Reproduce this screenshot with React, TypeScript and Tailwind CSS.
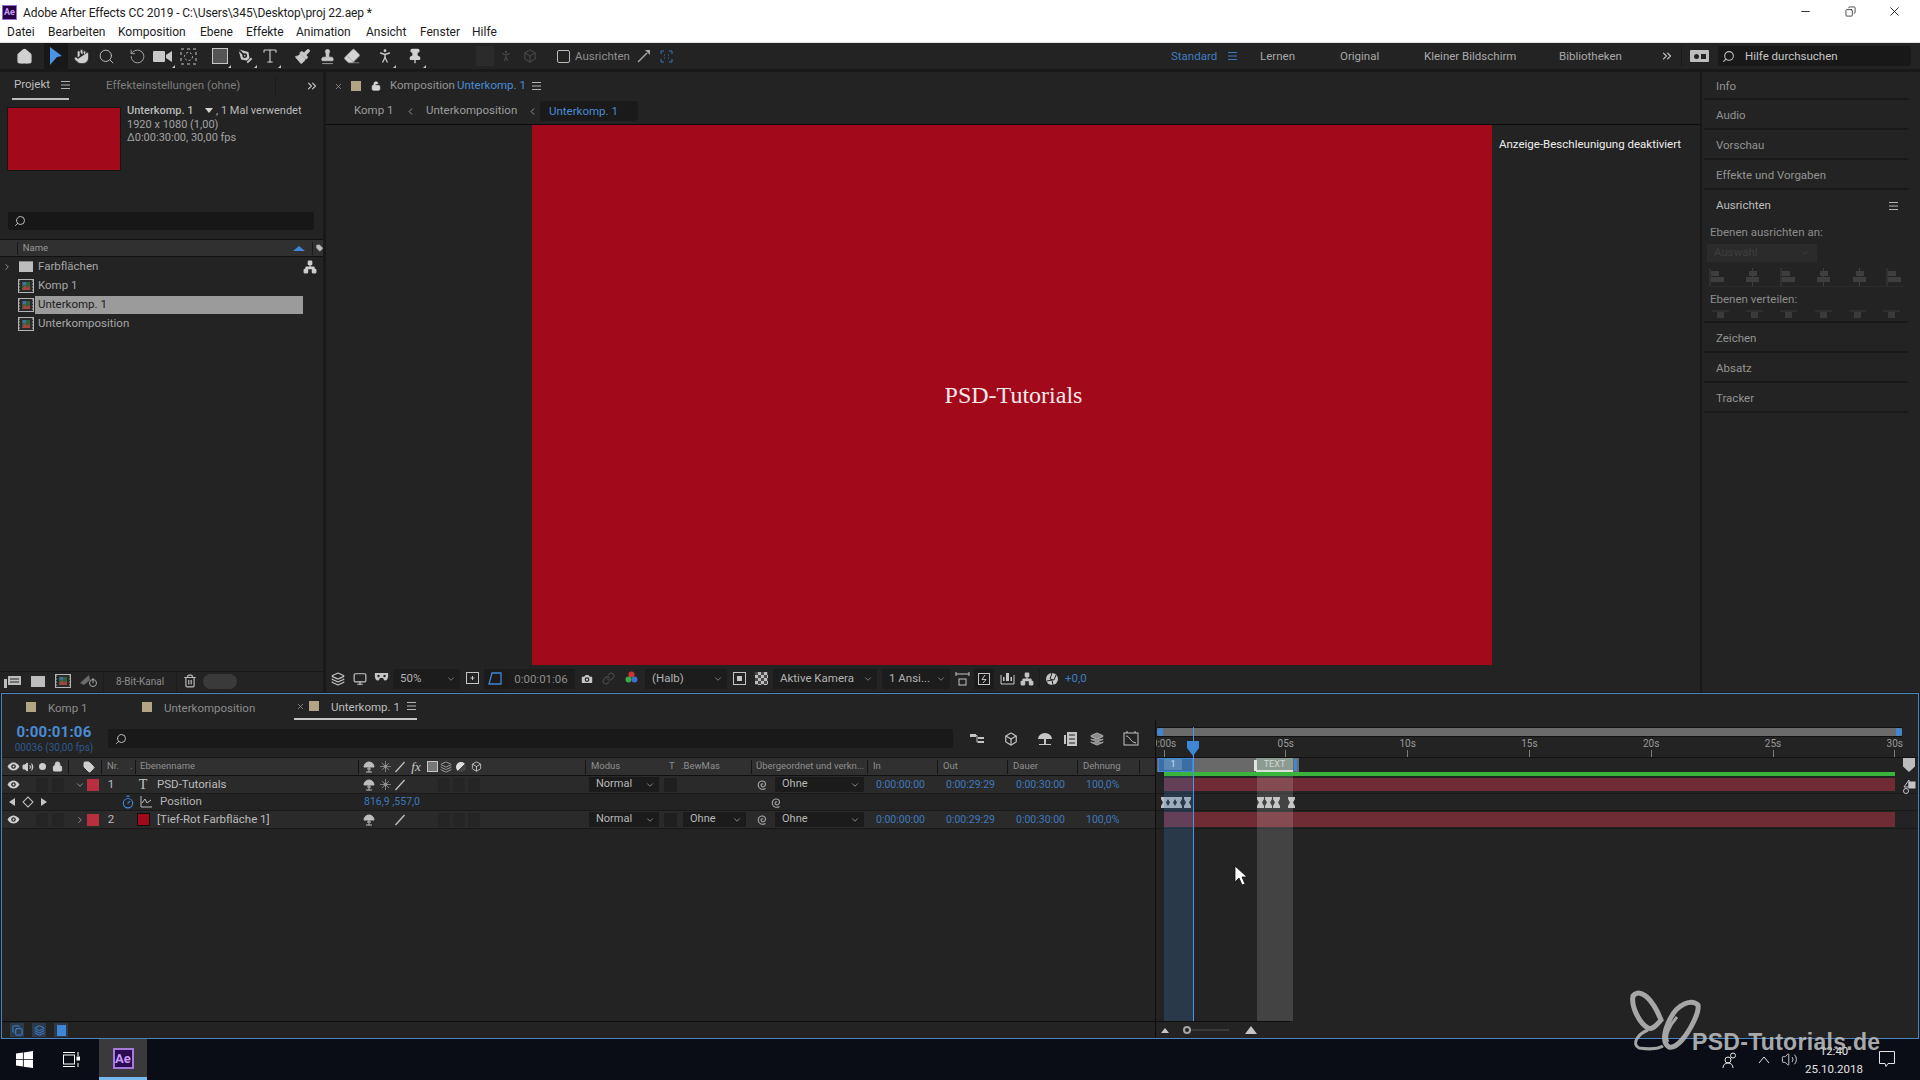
import React from "react";
import { ChevronDown, ChevronLeft, ChevronRight, ChevronsRight, Hand, House, Minus, Monitor, Network, PenTool, PersonStanding, Pin, RotateCcw, Search, Stamp, Trash2, Paintbrush, Eraser, Camera, Link, Timer, X, Copy, Type, Volume2, Tag, Lock, LockOpen, Box, Layers } from "lucide-react";

const Burger = ({ c = "#b5b5b5" }: { c?: string }) => (
  <svg width="11" height="10" viewBox="0 0 11 10"><path d="M1 1.5h9M1 5h9M1 8.5h9" stroke={c} strokeWidth="1.1" /></svg>
);
const Corner = () => <span className="absolute right-[1px] bottom-[1px] w-0 h-0 border-l-[3px] border-l-transparent border-b-[3px] border-b-[#c5c5c5]" />;
const Slot = ({ w, children, corner }: { w: string; children?: React.ReactNode; corner?: boolean }) => (
  <span className={`${w} relative h-full flex items-center justify-center shrink-0`}>{children}{corner && <Corner />}</span>
);
const Eye = () => (
  <svg width="13" height="9" viewBox="0 0 13 9"><path d="M.5 4.5C2.5 1.5 4.500 .5 6.500 .5s4 1 6 4c-2 3-4 4-6 4s-4-1-6-4z" fill="#d2d2d2" /><circle cx="6.500" cy="4.500" r="2.300" fill="#2a2a2a" /><circle cx="6.500" cy="4.500" r="1" fill="#d2d2d2" /></svg>
);
const Spiral = ({ c = "#a8a8a8" }: { c?: string }) => (
  <svg width="13" height="13" viewBox="0 0 13 13" fill="none"><path d="M7 6.500c0-1-1.800-1-2 .3-.2 1.600 1.500 2.500 3 1.800 1.800-.9 2-3.300.6-4.700C7 2.400 4 2.700 2.800 4.700 1.500 7 2.500 10 5 11c1.500.5 3 .3 4.500-.5" stroke={c} strokeWidth="1.100" /></svg>
);
const Swatch = ({ c = "#b3a583" }: { c?: string }) => <span className="block w-[10px] h-[10px] shrink-0" style={{ background: c }} />;
const CompIcon = () => (
  <svg width="16" height="14" viewBox="0 0 16 14" className="shrink-0"><rect x=".5" y=".5" width="15" height="13" fill="#2a2a2a" stroke="#b4b4b4" /><path d="M1 2h1M1 5h1M1 8h1M1 11h1M14 2h1M14 5h1M14 8h1M14 11h1" stroke="#b4b4b4" /><rect x="4" y="3" width="8" height="8" fill="#35603f" /><path d="M4 11l3-5 2 3 3-2v4z" fill="#a5443f" /><rect x="5" y="3" width="3" height="3" fill="#3f6fa8" /></svg>
);
const Drop = ({ w, label, ml = "", tc = "text-[#b2b2b2]" }: { w: string; label: string; ml?: string; tc?: string }) => (
  <span className={`${w} ${ml} h-[20px] bg-[#1c1c1c] rounded-[2px] flex items-center justify-between pl-[7px] pr-[4px] shrink-0 overflow-hidden`}>
    <span className={`${tc} whitespace-nowrap text-[11.500px]`}>{label}</span>
    <ChevronDown size={10} color="#8e8e8e" />
  </span>
);
const RowDrop = ({ w, label, ml = "" }: { w: string; label: string; ml?: string }) => (
  <span className={`${w} ${ml} h-[15px] bg-[#1b1b1b] flex items-center justify-between pl-[7px] pr-[4px] shrink-0`}>
    <span className="text-[#b8b8b8] text-[11px] whitespace-nowrap">{label}</span>
    <ChevronDown size={10} color="#9a9a9a" />
  </span>
);
const Sep = ({ ml = "" }: { ml?: string }) => <span className={`${ml} w-px h-[14px] bg-[#141414] shrink-0`} />;
const Time = ({ ml, w, t }: { ml: string; w: string; t: string }) => <span className={`${ml} ${w} shrink-0 text-[#3f79bd] text-[10.500px] whitespace-nowrap`}>{t}</span>;
const Dark = ({ ml }: { ml: string }) => <span className={`${ml} w-[12px] h-[14px] bg-[#252525] shrink-0`} />;
const SwitchA = () => <svg width="12" height="12" viewBox="0 0 12 12"><path d="M1 6a5 5 0 0 1 10 0zM6 6v5M3 11h6M4 8h4" stroke="#bdbdbd" fill="#bdbdbd" strokeWidth="1" /></svg>;
const SwitchB = () => <svg width="11" height="11" viewBox="0 0 11 11"><circle cx="5.500" cy="5.500" r="2" fill="#8e8e8e" /><path d="M5.500 0v11M0 5.500h11M2 2l7 7M9 2l-7 7" stroke="#8e8e8e" strokeWidth=".8" /></svg>;
const Slash = () => <svg width="12" height="12" viewBox="0 0 12 12"><path d="M1.500 11 10.500 1" stroke="#c8c8c8" strokeWidth="1.200" /></svg>;
const Hourglass = ({ x }: { x: number }) => (
  <svg width="7" height="11" viewBox="0 0 9 11" preserveAspectRatio="none" className="absolute top-[3px]" style={{ left: x }}><path d="M0 0h9v2L6.500 5.500 9 9v2H0V9l2.500-3.500L0 2z" fill="#bdbdbd" /></svg>
);
const AlignIcon = ({ v }: { v: number }) => (
  <svg width="17" height="18" viewBox="0 0 17 18" fill="#3e3e3e"><rect x={v === 0 ? 2 : 5} y="3" width="8" height="5" /><rect x="2" y="9" width="13" height="5" /><path d={v === 0 ? "M1 0v18" : "M8.500 0v18"} stroke="#3e3e3e" /></svg>
);
const Dist = () => <svg width="17" height="9" viewBox="0 0 17 9" fill="#3a3a3a"><path d="M0 1h17" stroke="#3a3a3a" /><rect x="5" y="2" width="7" height="6" /></svg>;

const ToolSquare = () => <span className="block w-[16px] h-[16px] border-[1.500px] border-[#c9c9c9] bg-[#555]" />;
const DashedBox = () => (
  <svg width="17" height="17" viewBox="0 0 17 17" fill="none"><rect x="1" y="1" width="15" height="15" stroke="#c4c4c4" strokeDasharray="3 3" /><circle cx="8.500" cy="8.500" r="4" stroke="#c4c4c4" strokeDasharray="2 2" /></svg>
);
const Cam = () => (
  <svg width="20" height="15" viewBox="0 0 20 15" fill="#c9c9c9"><rect x="0" y="2" width="12" height="11" rx="1" /><path d="M13 6l6-4v11l-6-4z" /></svg>
);

export default function App() {
  return (
    <div className="relative w-[1920px] h-[1080px] overflow-hidden flex flex-col bg-[#191919] font-['Roboto','Liberation_Sans',sans-serif] text-[11.500px] text-[#a8a8a8]">
      {/* title */}
      <div className="h-[43px] bg-white border-b border-[#e3e3e3] shrink-0 flex flex-col">
        <div className="h-[22px] flex items-center relative">
          <span className="ml-[2px] mt-[3px] w-[15px] h-[15px] bg-[#240046] border border-[#9a6fd0] text-[#c79bf2] text-[9px] font-bold flex items-center justify-center leading-none">Ae</span>
          <span className="ml-[6px] mt-[3px] text-[12px] text-[#1c1c1c] whitespace-nowrap tracking-[-0.100px]">Adobe After Effects CC 2019 - C:\Users\345\Desktop\proj 22.aep *</span>
          <span className="ml-auto flex items-center text-[#111]">
            <Minus size={13} strokeWidth={1.600} />
            <Copy size={11} strokeWidth={1.600} className="ml-[33px] -scale-x-100" />
            <X size={15} strokeWidth={1.400} className="ml-[31px] mr-[18px]" />
          </span>
        </div>
        <div className="h-[20px] flex items-center text-[12px] text-[#1c1c1c]">
          <span className="ml-[7px] w-[26px]">Datei</span>
          <span className="ml-[15px] w-[56px]">Bearbeiten</span>
          <span className="ml-[14px] w-[68px]">Komposition</span>
          <span className="ml-[14px] w-[32px]">Ebene</span>
          <span className="ml-[14px] w-[36px]">Effekte</span>
          <span className="ml-[14px] w-[56px]">Animation</span>
          <span className="ml-[14px] w-[40px]">Ansicht</span>
          <span className="ml-[14px] w-[38px]">Fenster</span>
          <span className="ml-[14px] w-[25px]">Hilfe</span>
        </div>
      </div>

      {/* toolbar */}
      <div className="h-[26px] shrink-0 bg-[#232323] flex items-center">
        <span className="ml-[12px]" />
        <Slot w="w-[24px]"><House size={17} fill="#d0d0d0" color="#d0d0d0" /></Slot>
        <span className="ml-[8px] w-[24px] h-full bg-[#181818] flex items-center justify-center shrink-0">
          <svg width="14" height="18" viewBox="0 0 14 18"><path d="M1 0l12 9-5 1-7 8z" fill="#4b93e4" /></svg>
        </span>
        <Slot w="w-[26px]"><Hand size={17} fill="#cfcfcf" color="#232323" strokeWidth={1} /></Slot>
        <Slot w="w-[24px]"><Search size={17} color="#c4c4c4" strokeWidth={1.300} /></Slot>
        <span className="ml-[6px]" />
        <Slot w="w-[26px]"><RotateCcw size={17} color="#a9a9a9" strokeWidth={1.300} /></Slot>
        <Slot w="w-[26px]" corner><Cam /></Slot>
        <Slot w="w-[24px]"><DashedBox /></Slot>
        <span className="ml-[8px]" />
        <Slot w="w-[24px]" corner><ToolSquare /></Slot>
        <Slot w="w-[26px]" corner><PenTool size={19} fill="#c9c9c9" color="#232323" /></Slot>
        <Slot w="w-[24px]" corner><Type size={18} color="#d0d0d0" strokeWidth={1.500} /></Slot>
        <span className="ml-[8px]" />
        <Slot w="w-[24px]"><Paintbrush size={17} fill="#c9c9c9" color="#c9c9c9" strokeWidth={1} /></Slot>
        <Slot w="w-[26px]"><Stamp size={17} fill="#c9c9c9" color="#c9c9c9" strokeWidth={1} /></Slot>
        <Slot w="w-[24px]"><Eraser size={18} fill="#d5d5d5" color="#9a9a9a" strokeWidth={1} /></Slot>
        <span className="ml-[9px]" />
        <Slot w="w-[24px]" corner><PersonStanding size={18} color="#c9c9c9" strokeWidth={1.800} /></Slot>
        <span className="ml-[6px]" />
        <Slot w="w-[24px]" corner><Pin size={16} fill="#d0d0d0" color="#d0d0d0" /></Slot>
        <span className="ml-[46px]" />
        <Slot w="w-[24px]"><span className="block w-[18px] h-[20px] bg-[#2b2b2b]" /></Slot>
        <Slot w="w-[18px]"><PersonStanding size={14} color="#444" /></Slot>
        <Slot w="w-[30px]"><Box size={14} color="#444" /></Slot>
        <span className="ml-[12px] w-[13px] h-[13px] border-[1.500px] border-[#bdbdbd] rounded-[2px] shrink-0" />
        <span className="ml-[5px] mt-[2px] w-[54px] text-[#8f8f8f] whitespace-nowrap">Ausrichten</span>
        <Slot w="w-[18px] ml-[5px]"><svg width="13" height="13" viewBox="0 0 13 13"><path d="M1 12 10 3" stroke="#a5a5a5" strokeWidth="1.500" /><path d="M8 0h5v5z" fill="#a5a5a5" /></svg></Slot>
        <Slot w="w-[16px] ml-[6px]"><svg width="13" height="13" viewBox="0 0 13 13" fill="none" stroke="#3a74b0"><path d="M1 4V1h3M9 1h3v3M12 9v3H9M4 12H1V9M4 5h1M8 5h1M4 8h1M8 8h1" /></svg></Slot>
        <span className="ml-[497px] mt-[2px] w-[45px] text-[#3f7dc1] shrink-0">Standard</span>
        <span className="ml-[11px]"><Burger c="#3f7dc1" /></span>
        <span className="ml-[22px] mt-[2px] w-[33px] shrink-0">Lernen</span>
        <span className="ml-[47px] mt-[2px] w-[39px] shrink-0">Original</span>
        <span className="ml-[45px] mt-[2px] w-[90px] shrink-0 whitespace-nowrap">Kleiner Bildschirm</span>
        <span className="ml-[45px] mt-[2px] w-[62px] shrink-0">Bibliotheken</span>
        <ChevronsRight size={14} color="#c5c5c5" className="ml-[39px] shrink-0" />
        <span className="ml-[7px] w-px h-[20px] bg-[#191919]" />
        <span className="ml-[8px] w-[19px] h-[12px] bg-[#bdbdbd] rounded-[1px] flex items-center justify-center gap-[2px] shrink-0"><span className="w-[5px] h-[5px] rounded-full bg-[#232323]" /><span className="w-[5px] h-[5px] bg-[#232323]" /></span>
        <span className="ml-[9px] w-[193px] h-[20px] bg-[#181818] rounded-[3px] flex items-center pl-[4px] shrink-0">
          <Search size={13} color="#c0c0c0" className="-scale-x-100" />
          <span className="ml-[10px] mt-[2px] text-[#c6c6c6] whitespace-nowrap">Hilfe durchsuchen</span>
        </span>
      </div>
      <div className="h-[3px] shrink-0" />

      {/* main */}
      <div className="h-[620px] shrink-0 flex">
        {/* project */}
        <div className="w-[323px] bg-[#232323] flex flex-col shrink-0">
          <div className="h-[28px] flex items-center shrink-0">
            <span className="ml-[12px] w-[57px] h-full border-b-2 border-[#bdbdbd] flex items-center pl-[2px] text-[#bcbcbc]">Projekt<span className="ml-[10px]"><Burger /></span></span>
            <span className="ml-[37px] w-[131px] text-[#7e7e7e] whitespace-nowrap">Effekteinstellungen (ohne)</span>
            <span className="ml-[38px] h-[20px] w-px bg-[#1b1b1b]" />
            <ChevronsRight size={14} color="#c5c5c5" className="ml-[29px]" />
          </div>
          <div className="h-[112px] flex shrink-0">
            <div className="ml-[7px] mt-[7px] w-[114px] h-[64px] bg-[#a20a1c] border border-[#151515]" />
            <div className="ml-[6px] mt-[4px] flex flex-col text-[11px] leading-[13.500px]">
              <span className="flex items-center text-[#b9b9b9] whitespace-nowrap"><span className="font-medium w-[72px]">Unterkomp. 1</span><span className="ml-[6px] w-0 h-0 border-x-[4px] border-x-transparent border-t-[5px] border-t-[#d5d5d5]" /><span className="ml-[3px]">, 1 Mal verwendet</span></span>
              <span className="text-[#a4a4a4]">1920 x 1080 (1,00)</span>
              <span className="text-[#a4a4a4]">Δ0:00:30:00, 30,00 fps</span>
            </div>
          </div>
          <div className="ml-[8px] w-[306px] h-[18px] bg-[#171717] rounded-[2px] flex items-center pl-[6px] shrink-0">
            <Search size={12} color="#bdbdbd" className="-scale-x-100" />
          </div>
          <div className="mt-[9px] h-[18px] bg-[#303030] border-y border-[#111] flex items-center shrink-0 relative">
            <span className="ml-[17px] w-px h-[13px] bg-[#191919]" />
            <span className="ml-[5px] text-[9.500px] text-[#9a9a9a]">Name</span>
            <span className="ml-[245px] w-0 h-0 border-x-[6px] border-x-transparent border-b-[5px] border-b-[#3f86d6]" />
            <span className="ml-[7px] w-px h-[13px] bg-[#191919]" />
            <Tag size={10} fill="#bdbdbd" color="#bdbdbd" className="ml-[3px]" />
          </div>
          <div className="flex flex-col text-[11.500px] text-[#a6a6a6]">
            <div className="h-[19px] flex items-center">
              <ChevronRight size={10} color="#a5a5a5" className="ml-[2px]" />
              <span className="ml-[7px] w-[14px] h-[11px] bg-[#bdbdbd] border-t border-[#8a8a8a] shrink-0" />
              <span className="ml-[5px] w-[264px]">Farbflächen</span>
              <Network size={14} color="#d0d0d0" fill="#d0d0d0" className="ml-[1px]" />
            </div>
            <div className="h-[19px] flex items-center"><span className="ml-[18px]"><CompIcon /></span><span className="ml-[4px]">Komp 1</span></div>
            <div className="h-[19px] flex items-center"><span className="ml-[18px]"><CompIcon /></span><span className="ml-[1px] pl-[3px] w-[268px] h-[18px] bg-[#9b9b9b] text-[#1c1c1c] flex items-center">Unterkomp. 1</span></div>
            <div className="h-[19px] flex items-center"><span className="ml-[18px]"><CompIcon /></span><span className="ml-[4px]">Unterkomposition</span></div>
          </div>
          <div className="mt-auto h-[19px] mb-[2px] flex items-center border-t border-[#171717] shrink-0">
            <Slot w="w-[25px]"><svg width="17" height="13" viewBox="0 0 17 13" fill="#bdbdbd"><rect x="0" y="4" width="3" height="9" /><rect x="4" y="1" width="13" height="9" /><path d="M6 4h9M6 7h9" stroke="#232323" /></svg></Slot>
            <Slot w="w-[25px]"><span className="block w-[14px] h-[11px] bg-[#bdbdbd]" /></Slot>
            <Slot w="w-[25px]"><CompIcon /></Slot>
            <Slot w="w-[28px]"><svg width="18" height="14" viewBox="0 0 18 14" fill="none"><path d="M0 9 9 1l1 5-6 5z" fill="#6b6b6b" /><circle cx="13" cy="9" r="3.500" stroke="#a5a5a5" /><path d="M13 4v5" stroke="#a5a5a5" /></svg></Slot>
            <span className="w-[74px] h-[19px] border-x border-[#1b1b1b] text-center text-[10px] leading-[19px] text-[#8c8c8c] shrink-0">8-Bit-Kanal</span>
            <Slot w="w-[26px]"><Trash2 size={14} color="#bdbdbd" /></Slot>
            <span className="w-[34px] h-[15px] bg-[#3a3a3a] rounded-full" />
          </div>
        </div>
        <div className="w-[3px] shrink-0" />

        {/* comp */}
        <div className="w-[1374px] bg-[#232323] flex flex-col shrink-0">
          <div className="h-[28px] flex items-center shrink-0">
            <X size={9} color="#9a9a9a" className="ml-[8px]" />
            <span className="ml-[8px]"><Swatch /></span>
            <LockOpen size={10} color="#d5d5d5" fill="#d5d5d5" className="ml-[10px]" />
            <span className="ml-[9px] w-[62px] text-[#949494] whitespace-nowrap">Komposition</span>
            <span className="ml-[5px] w-[66px] text-[#4a8bd4] whitespace-nowrap">Unterkomp. 1</span>
            <span className="ml-[8px]"><Burger /></span>
          </div>
          <div className="h-[24px] pb-[2px] flex items-center shrink-0">
            <span className="ml-[28px] w-[38px] text-[#9c9c9c] whitespace-nowrap">Komp 1</span>
            <ChevronLeft size={11} color="#9c9c9c" className="ml-[13px]" />
            <span className="ml-[10px] w-[89px] text-[#9c9c9c] whitespace-nowrap">Unterkomposition</span>
            <ChevronLeft size={11} color="#9c9c9c" className="ml-[12px]" />
            <span className="ml-[2px] w-[98px] h-[20px] bg-[#1a1a1a] rounded-[2px] pl-[9px] leading-[20px] text-[#4a8bd4]">Unterkomp. 1</span>
          </div>
          <div className="h-[541px] border-t border-[#0c0c0c] flex shrink-0">
            <div className="ml-[206px] w-[960px] h-[540px] bg-[#a20a1c] flex items-center justify-center shrink-0">
              <span className="text-[24px] text-[#f4e9e9] font-['Liberation_Serif',serif] ml-[3px]">PSD-Tutorials</span>
            </div>
            <span className="ml-[7px] mt-[11px] text-[11.500px] text-[#eeeeee] whitespace-nowrap h-[14px]">Anzeige-Beschleunigung deaktiviert</span>
          </div>
          <div className="h-[27px] flex items-center shrink-0 text-[#b0b0b0]">
            <Slot w="w-[24px]"><Layers size={14} color="#c5c5c5" /></Slot>
            <Slot w="w-[19px]"><Monitor size={14} color="#c5c5c5" /></Slot>
            <Slot w="w-[24px]"><svg width="15" height="13" viewBox="0 0 15 13" fill="#c5c5c5"><path d="M1 1h13c1 6-2 9-4 7l-1-2H6L5 8C3 10 0 7 1 1z" /><circle cx="4.500" cy="4" r="1.200" fill="#232323" /><circle cx="10.500" cy="4" r="1.200" fill="#232323" /></svg></Slot>
            <Drop w="w-[67px]" label="50%" />
            <Slot w="w-[24px]"><svg width="15" height="15" viewBox="0 0 15 15" fill="none" stroke="#c5c5c5"><rect x="1.500" y="1.500" width="12" height="11" /><path d="M7.500 5v4M5.500 7h4" /></svg></Slot>
            <span className="w-[23px] h-[20px] flex items-center justify-center bg-[#1b1b1b] shrink-0"><svg width="15" height="15" viewBox="0 0 15 15" fill="none" stroke="#3f86d6" strokeWidth="1.300"><path d="M4 2h9v11H1z" /></svg></span>
            <span className="w-[68px] h-[20px] bg-[#1c1c1c] text-center text-[#8d8d8d] leading-[20px] shrink-0">0:00:01:06</span>
            <Slot w="w-[24px]"><Camera size={14} fill="#c5c5c5" color="#232323" /></Slot>
            <Slot w="w-[19px]"><Link size={13} color="#4a4a4a" /></Slot>
            <Slot w="w-[26px]"><svg width="13" height="15" viewBox="0 0 13 15"><circle cx="6.500" cy="3.500" r="3" fill="#d13232" /><circle cx="3.500" cy="8.500" r="3" fill="#3aaa46" /><circle cx="9.500" cy="8.500" r="3" fill="#3c6fd1" /></svg></Slot>
            <span className="ml-[1px]" />
            <Drop w="w-[82px]" label="(Halb)" />
            <Slot w="w-[25px]"><span className="block w-[13px] h-[13px] border border-[#c5c5c5] p-[3px]"><span className="block w-full h-full bg-[#c5c5c5]" /></span></Slot>
            <Slot w="w-[18px]"><span className="block w-[13px] h-[13px] bg-[repeating-conic-gradient(#bdbdbd_0_25%,#4a4a4a_0_50%)] bg-[length:6px_6px]" /></Slot>
            <Drop w="w-[104px]" ml="ml-[3px]" label="Aktive Kamera" />
            <Drop w="w-[68px]" ml="ml-[5px]" label="1 Ansi..." />
            <Slot w="w-[24px]"><svg width="15" height="14" viewBox="0 0 15 14" fill="none" stroke="#c5c5c5"><path d="M1 2h13M1 0v4M14 0v4" /><rect x="4" y="7" width="7" height="6" /></svg></Slot>
            <span className="w-[20px] h-[20px] bg-[#1b1b1b] flex items-center justify-center shrink-0"><svg width="14" height="14" viewBox="0 0 14 14" fill="none" stroke="#c5c5c5"><rect x="1.500" y="1.500" width="11" height="11" /><path d="M8 3 5 7.500h4L6 11" /></svg></span>
            <Slot w="w-[26px]"><svg width="15" height="14" viewBox="0 0 15 14" fill="#c5c5c5"><rect x="6" y="1" width="3" height="8" /><path d="M1 3v9h13V3" fill="none" stroke="#c5c5c5" /><rect x="3" y="5" width="1.500" height="4" /><rect x="10.500" y="5" width="1.500" height="4" /></svg></Slot>
            <Slot w="w-[14px]"><Network size={14} fill="#c5c5c5" color="#c5c5c5" /></Slot>
            <span className="ml-[5px] w-px h-[18px] bg-[#1b1b1b]" />
            <Slot w="w-[24px]"><svg width="14" height="14" viewBox="0 0 14 14"><circle cx="7" cy="7" r="6" fill="#c5c5c5" /><path d="M7 1 5 7l4 1 2-5M2 9l5-1 1 5" stroke="#232323" fill="none" /></svg></Slot>
            <span className="ml-[1px] text-[#3f7dc1] text-[11.500px]">+0,0</span>
          </div>
        </div>
        <div className="w-[2px] shrink-0" />

        {/* right */}
        <div className="flex-1 bg-[#232323] flex flex-col">
          {["Info", "Audio", "Vorschau", "Effekte und Vorgaben"].map((t, i) => (
            <div key={t} className={`${i === 0 ? "h-[28px]" : "h-[30px]"} ml-[2px] mr-[12px] border-b-2 border-[#191919] flex items-center pl-[12px] pt-[3px] text-[#939393] shrink-0`}>{t}</div>
          ))}
          <div className="h-[133px] ml-[2px] mr-[12px] border-b-2 border-[#191919] flex flex-col shrink-0">
            <div className="h-[36px] pb-[4px] flex items-center justify-between pl-[12px] pr-[9px] text-[#bdbdbd] shrink-0"><span>Ausrichten</span><Burger /></div>
            <div className="h-[12px] pl-[6px] leading-[12px] text-[#8c8c8c] shrink-0">Ebenen ausrichten an:</div>
            <div className="mt-[6px] ml-[3px] w-[110px] h-[18px] bg-[#2b2b2b] flex items-center justify-between px-[7px] text-[#3f3f3f] shrink-0"><span>Auswahl</span><ChevronDown size={10} color="#3f3f3f" /></div>
            <div className="mt-[6px] h-[19px] mx-[5px] flex justify-between border-b border-[#2b2b2b] shrink-0">
              <AlignIcon v={0} /><AlignIcon v={1} /><AlignIcon v={0} /><AlignIcon v={1} /><AlignIcon v={1} /><AlignIcon v={0} />
            </div>
            <div className="mt-[6px] h-[12px] pl-[6px] leading-[12px] text-[#8c8c8c] shrink-0">Ebenen verteilen:</div>
            <div className="mt-[5px] mx-[8px] flex justify-between shrink-0"><Dist /><Dist /><Dist /><Dist /><Dist /><Dist /></div>
          </div>
          {["Zeichen", "Absatz", "Tracker"].map((t) => (
            <div key={t} className="h-[30px] ml-[2px] mr-[12px] border-b-2 border-[#191919] flex items-center pl-[12px] pt-[3px] text-[#939393] shrink-0">{t}</div>
          ))}
        </div>
      </div>

      {/* timeline */}
      <div className="ml-px mt-[1px] w-[1918px] h-[346px] shrink-0 border border-[#4a83bd] bg-[#232323] flex flex-col relative">
        <div className="h-[26px] flex items-center shrink-0">
          <span className="ml-[24px]"><Swatch /></span>
          <span className="ml-[12px] mt-[3px] w-[38px] text-[#8c8c8c] whitespace-nowrap">Komp 1</span>
          <span className="ml-[56px]"><Swatch /></span>
          <span className="ml-[12px] mt-[3px] w-[89px] text-[#8c8c8c] whitespace-nowrap">Unterkomposition</span>
          <span className="ml-[41px] w-[123px] h-full border-b-2 border-[#c5c5c5] flex items-center text-[#bdbdbd] whitespace-nowrap">
            <X size={9} color="#9a9a9a" className="ml-[2px]" />
            <span className="ml-[4px]"><Swatch /></span>
            <span className="ml-[12px] mt-[3px] w-[67px]">Unterkomp. 1</span>
            <span className="ml-[8px]"><Burger /></span>
          </span>
        </div>
        <div className="flex-1 flex min-h-0">
          {/* left */}
          <div className="w-[1153px] shrink-0 flex flex-col">
            <div className="h-[38px] flex items-center shrink-0 border-b border-[#141414]">
              <div className="ml-[10px] mt-[1px] w-[84px] flex flex-col items-center leading-none">
                <span className="text-[15px] font-bold tracking-[0.200px] text-[#4a8bd4]">0:00:01:06</span>
                <span className="mt-[3px] text-[10px] text-[#2d5a8e] whitespace-nowrap">00036 (30,00 fps)</span>
              </div>
              <span className="ml-[12px] w-[845px] h-[19px] bg-[#191919] rounded-[2px] flex items-center pl-[7px] shrink-0"><Search size={12} color="#bdbdbd" className="-scale-x-100" /></span>
              <Slot w="w-[18px] ml-[15px]"><svg width="15" height="14" viewBox="0 0 15 14" fill="#c5c5c5"><rect x="0" y="2" width="6" height="3" /><rect x="8" y="5" width="6" height="2" /><rect x="8" y="9" width="6" height="2" /><path d="M6 3.500h1V10h1" stroke="#c5c5c5" fill="none" /></svg></Slot>
              <Slot w="w-[20px] ml-[15px]"><Box size={14} color="#c5c5c5" /></Slot>
              <Slot w="w-[18px] ml-[15px]"><svg width="16" height="14" viewBox="0 0 16 14" fill="#c5c5c5"><path d="M1 7a7 6 0 0 1 14 0zM7 7v5H2v1h12v-1H9V7z" /></svg></Slot>
              <Slot w="w-[16px] ml-[9px]"><svg width="14" height="14" viewBox="0 0 14 14" fill="#c5c5c5"><rect x="3" y="0" width="10" height="14" /><path d="M5 3h6M5 7h6M5 11h6" stroke="#232323" /><rect x="0" y="3" width="2" height="9" /></svg></Slot>
              <Slot w="w-[16px] ml-[10px]"><Layers size={14} color="#a5a5a5" fill="#8a8a8a" /></Slot>
              <Slot w="w-[16px] ml-[18px]"><svg width="16" height="15" viewBox="0 0 16 15" fill="none" stroke="#c5c5c5"><rect x="1" y="2" width="14" height="12" /><path d="M3 5c4 0 4 6 10 7M4 0v2M12 0v2" /></svg></Slot>
            </div>
            <div className="h-[18px] bg-[#303030] border-b border-[#101010] flex items-center shrink-0 text-[9.500px] text-[#8f8f8f]">
              <Slot w="w-[14px] ml-[4px]"><Eye /></Slot>
              <Slot w="w-[15px]"><Volume2 size={12} color="#cfcfcf" fill="#cfcfcf" /></Slot>
              <Slot w="w-[15px]"><span className="block w-[7px] h-[7px] rounded-full bg-[#cfcfcf]" /></Slot>
              <Slot w="w-[15px]"><Lock size={11} color="#cfcfcf" fill="#cfcfcf" /></Slot>
              <Sep ml="ml-[3px]" />
              <Slot w="w-[18px] ml-[11px]"><Tag size={12} fill="#cfcfcf" color="#cfcfcf" /></Slot>
              <Sep ml="ml-[3px]" />
              <span className="ml-[5px] w-[14px]">Nr.</span>
              <span className="ml-[9px] w-[4px]">.</span>
              <Sep ml="ml-[1px]" />
              <span className="ml-[4px] w-[214px]">Ebenenname</span>
              <Sep ml="ml-[4px]" />
              <Slot w="w-[16px] ml-[2px]"><SwitchA /></Slot>
              <Slot w="w-[16px]"><SwitchB /></Slot>
              <Slot w="w-[14px]"><Slash /></Slot>
              <Slot w="w-[18px]"><span className="italic font-['Liberation_Serif',serif] text-[13px] text-[#c8c8c8]">fx</span></Slot>
              <Slot w="w-[14px]"><span className="block w-[11px] h-[11px] border border-[#c5c5c5] bg-[#777]" /></Slot>
              <Slot w="w-[14px]"><Layers size={12} color="#9a9a9a" /></Slot>
              <Slot w="w-[15px]"><span className="block w-[10px] h-[10px] rounded-full bg-[linear-gradient(135deg,#ddd_50%,#444_50%)]" /></Slot>
              <Slot w="w-[16px]"><Box size={11} color="#c5c5c5" /></Slot>
              <Sep ml="ml-[101px]" />
              <span className="ml-[5px] w-[40px]">Modus</span>
              <span className="ml-[38px] w-[6px]">T</span>
              <span className="ml-[6px] w-[60px]">.BewMas</span>
              <Sep ml="ml-[10px]" />
              <span className="ml-[4px] w-[110px] whitespace-nowrap">Übergeordnet und verkn...</span>
              <Sep ml="ml-[1px]" />
              <span className="ml-[5px] w-[64px]">In</span>
              <Sep />
              <span className="ml-[5px] w-[64px]">Out</span>
              <Sep />
              <span className="ml-[5px] w-[64px]">Dauer</span>
              <Sep />
              <span className="ml-[5px] w-[56px]">Dehnung</span>
              <Sep />
            </div>
            <div className="h-[18px] border-b border-[#191919] bg-[#2a2a2a] flex items-center shrink-0">
              <Slot w="w-[15px] ml-[4px]"><Eye /></Slot>
              <Dark ml="ml-[15px]" /><Dark ml="ml-[4px]" />
              <Slot w="w-[12px] ml-[10px]"><ChevronDown size={10} color="#a5a5a5" /></Slot>
              <span className="ml-[1px] w-[12px] h-[12px] bg-[#b83040]" />
              <span className="w-[24px] text-center text-[#bdbdbd]">1</span>
              <span className="ml-[9px] w-[22px] text-center font-['Liberation_Serif',serif] text-[14px] text-[#c5c5c5]">T</span>
              <span className="ml-[3px] w-[204px] text-[#bcbcbc]">PSD-Tutorials</span>
              <Slot w="w-[16px]"><SwitchA /></Slot>
              <Slot w="w-[16px]"><SwitchB /></Slot>
              <Slot w="w-[14px]"><Slash /></Slot>
              <Dark ml="ml-[31px]" /><Dark ml="ml-[3px]" /><Dark ml="ml-[3px]" />
              <RowDrop w="w-[70px]" ml="ml-[109px]" label="Normal" />
              <span className="ml-[5px] w-[13px] h-[14px] bg-[#1f1f1f]" />
              <Slot w="w-[16px] ml-[77px]"><Spiral /></Slot>
              <RowDrop w="w-[89px]" ml="ml-[5px]" label="Ohne" />
              <Time ml="ml-[12px]" w="w-[51px]" t="0:00:00:00" />
              <Time ml="ml-[19px]" w="w-[51px]" t="0:00:29:29" />
              <Time ml="ml-[19px]" w="w-[51px]" t="0:00:30:00" />
              <Time ml="ml-[19px]" w="w-[35px]" t="100,0%" />
            </div>
            <div className="h-[17px] border-b border-[#191919] flex items-center shrink-0">
              <span className="ml-[7px] w-0 h-0 border-y-[4px] border-y-transparent border-r-[6px] border-r-[#c5c5c5]" />
              <span className="ml-[9px] w-[8px] h-[8px] rotate-45 border border-[#c5c5c5]" />
              <span className="ml-[9px] w-0 h-0 border-y-[4px] border-y-transparent border-l-[6px] border-l-[#c5c5c5]" />
              <Timer size={14} color="#3f86d6" className="ml-[74px]" />
              <svg width="12" height="12" viewBox="0 0 12 12" fill="none" stroke="#bdbdbd" className="ml-[5px]"><path d="M1 0v11h11M2 7l3-4 2 4 4-3" /></svg>
              <span className="ml-[8px] w-[40px] text-[#b2b2b2]">Position</span>
              <span className="ml-[164px] w-[60px] text-[10.500px] text-[#3f79bd] whitespace-nowrap">816,9 ,557,0</span>
              <Slot w="w-[16px] ml-[344px]"><Spiral /></Slot>
            </div>
            <div className="h-[18px] border-b border-[#191919] bg-[#2a2a2a] flex items-center shrink-0">
              <Slot w="w-[15px] ml-[4px]"><Eye /></Slot>
              <Dark ml="ml-[15px]" /><Dark ml="ml-[4px]" />
              <Slot w="w-[12px] ml-[10px]"><ChevronRight size={10} color="#a5a5a5" /></Slot>
              <span className="ml-[1px] w-[12px] h-[12px] bg-[#b83040]" />
              <span className="w-[24px] text-center text-[#bdbdbd]">2</span>
              <span className="ml-[14px] w-[13px] h-[13px] bg-[#a20a1c] border border-[#0f0f0f] shrink-0" />
              <span className="ml-[7px] w-[204px] text-[#bcbcbc] whitespace-nowrap">[Tief-Rot Farbfläche 1]</span>
              <Slot w="w-[16px]"><SwitchA /></Slot>
              <span className="w-[16px]" />
              <Slot w="w-[14px]"><Slash /></Slot>
              <Dark ml="ml-[31px]" /><Dark ml="ml-[3px]" /><Dark ml="ml-[3px]" />
              <RowDrop w="w-[70px]" ml="ml-[109px]" label="Normal" />
              <span className="ml-[5px] w-[13px] h-[14px] bg-[#1f1f1f]" />
              <RowDrop w="w-[63px]" ml="ml-[6px]" label="Ohne" />
              <Slot w="w-[16px] ml-[8px]"><Spiral /></Slot>
              <RowDrop w="w-[89px]" ml="ml-[5px]" label="Ohne" />
              <Time ml="ml-[12px]" w="w-[51px]" t="0:00:00:00" />
              <Time ml="ml-[19px]" w="w-[51px]" t="0:00:29:29" />
              <Time ml="ml-[19px]" w="w-[51px]" t="0:00:30:00" />
              <Time ml="ml-[19px]" w="w-[35px]" t="100,0%" />
            </div>
            <div className="flex-1" />
            <div className="h-[17px] border-t border-[#0d0d0d] flex items-center shrink-0">
              <span className="ml-[8px] w-[14px] h-[14px] bg-[#2c3b4c] flex items-center justify-center"><Copy size={11} color="#3f86d6" /></span>
              <span className="ml-[8px] w-[14px] h-[14px] bg-[#2c3b4c] flex items-center justify-center"><Layers size={11} color="#3f86d6" /></span>
              <span className="ml-[8px] w-[14px] h-[14px] bg-[#2c3b4c] flex items-center justify-center"><span className="block w-[9px] h-[11px] bg-[#3f86d6]" /></span>
            </div>
          </div>
          {/* right timeline */}
          <div className="flex-1 relative overflow-hidden border-l border-[#0d0d0d] flex flex-col">
            <div className="h-[18px] pt-[7px] px-px shrink-0">
              <div className="w-[745px] h-[10px] bg-[#6b6b6b] border-y border-[#111] relative">
                <span className="absolute left-0 top-0 w-[6px] h-full bg-[#3f86d6] rounded-l-[4px]" />
                <span className="absolute right-0 top-0 w-[6px] h-full bg-[#3f86d6] rounded-r-[4px]" />
              </div>
            </div>
            <div className="h-[19px] relative shrink-0 text-[10px] text-[#9a9a9a]">
              {["0:00s", "05s", "10s", "15s", "20s", "25s", "30s"].map((t, i) => (
                <div key={t} className="absolute top-0 flex flex-col items-center w-[40px]" style={{ left: 8 + i * 121.8 - 20 }}>
                  <span className="leading-[12px]">{t}</span>
                  <span className="w-px h-[7px] bg-[#7a7a7a]" />
                </div>
              ))}
            </div>
            <div className="h-[15px] shrink-0 flex items-stretch relative border-t border-[#111]">
              <div className="w-[142px] ml-px bg-[#696969] relative">
                <span className="absolute left-[1px] top-0 bottom-0 w-[35px] bg-[#3c6ea3] border border-[#3f86d6]" />
                <span className="absolute left-[7px] top-[1px] w-[18px] h-[11px] bg-[#5a87b5] text-[9px] leading-[11px] text-center text-[#cfe0f0]">1</span>
                <span className="absolute left-[99px] top-0 bottom-0 w-[37px] bg-[#8c9c93] text-[9px] leading-[13px] text-center text-[#cfd8d2] border-b-2 border-[#d5e0d8]">TEXT</span>
                <span className="absolute left-[97px] top-[2px] w-[3px] h-[11px] bg-[#e3e3e3]" />
                <span className="absolute left-[137px] top-[1px] w-[3px] h-[12px] bg-[#3f86d6]" />
              </div>
            </div>
            <div className="h-[4px] bg-[#3bb43d] ml-[8px] w-[731px] shrink-0" />
            <div className="h-[18px] border-b border-[#191919] py-[2px] shrink-0"><div className="ml-[8px] w-[731px] h-full bg-[#6f2c34]" /></div>
            <div className="h-[17px] border-b border-[#191919] relative shrink-0">
              {[5, 12, 19, 28, 101, 109, 117, 132].map((x) => <Hourglass key={x} x={x} />)}
            </div>
            <div className="h-[18px] border-b border-[#191919] py-[1px] shrink-0"><div className="ml-[8px] w-[731px] h-full bg-[#6f2c34]" /></div>
            <div className="flex-1" />
            <div className="h-[17px] border-t border-[#0d0d0d] w-[134px] flex items-center shrink-0">
              <span className="ml-[5px] w-0 h-0 border-x-[4px] border-x-transparent border-b-[5px] border-b-[#c5c5c5]" />
              <span className="ml-[14px] w-[8px] h-[8px] rounded-full border-2 border-[#a5a5a5]" />
              <span className="w-[38px] h-[2px] bg-[#3a3a3a]" />
              <span className="ml-[16px] w-0 h-0 border-x-[6px] border-x-transparent border-b-[8px] border-b-[#c5c5c5]" />
            </div>
            {/* overlays */}
            <span className="absolute left-[8px] top-[56px] w-[29px] bottom-[17px] bg-[#3f7dc1]/25" />
            <span className="absolute left-[101px] top-[56px] w-[36px] bottom-[17px] bg-white/15" />
            <span className="absolute left-[37px] top-[7px] w-px bottom-[17px] bg-[#4a93e6]" />
            <svg width="12" height="15" viewBox="0 0 12 15" className="absolute left-[31px] top-[21px]"><path d="M0 0h12v7l-6 8-6-8z" fill="#3f86d6" /></svg>
            <span className="absolute right-[3px] top-[38px] w-[12px] h-[14px] bg-[#bdbdbd] [clip-path:polygon(0_0,100%_0,100%_60%,50%_100%,0_60%)]" />
            <svg width="14" height="15" viewBox="0 0 14 15" className="absolute right-[2px] top-[59px]" fill="none" stroke="#c5c5c5"><path d="M2 8 7 1v7z" /><rect x="7" y="3" width="6" height="6" fill="#c5c5c5" /><circle cx="4" cy="12" r="2.500" /></svg>
            <svg width="14" height="22" viewBox="0 0 14 22" className="absolute left-[78px] top-[145px]"><path d="M1 1v16l4-4 3 7 3-1-3-7h5z" fill="#fff" stroke="#111" strokeWidth=".8" /></svg>
          </div>
        </div>
      </div>

      {/* taskbar */}
      <div className="flex-1 bg-[#0a0d16] flex items-center text-[#e2e2e2]">
        <svg width="17" height="17" viewBox="0 0 16 16" fill="#fff" className="ml-[16px]"><path d="M0 2.300 6.500 1.400v6.100H0zM7.300 1.300 16 0v7.500H7.300zM0 8.300h6.500v6.200L0 13.600zM7.300 8.300H16V16l-8.700-1.200z" /></svg>
        <svg width="17" height="15" viewBox="0 0 17 15" fill="none" stroke="#fff" className="ml-[30px]"><rect x=".5" y="3" width="11" height="9" /><path d="M0 .5h12M0 14.500h12M15 0v4M15 11v4" /><rect x="14" y="5" width="3" height="3" fill="#fff" /></svg>
        <div className="ml-[19px] w-[48px] h-full bg-[#3a3a3d] border-b-[3px] border-[#76b9ed] flex items-center justify-center shrink-0">
          <span className="w-[21px] h-[21px] bg-[#2a0a52] border-2 border-[#a77ad8] text-[#c99bf5] text-[13px] font-bold leading-none flex items-center justify-center">Ae</span>
        </div>
        <div className="ml-auto flex items-center mr-[25px]">
          <svg width="16" height="16" viewBox="0 0 16 16" fill="none" stroke="#e5e5e5"><circle cx="6" cy="8" r="3" /><path d="M1 16c0-3 2-5 5-5s5 2 5 5M11 6a2.500 2.500 0 1 0 0-5 2.500 2.500 0 0 0 0 5z" /></svg>
          <svg width="12" height="8" viewBox="0 0 12 8" fill="none" stroke="#e5e5e5" className="ml-[20px]"><path d="M1 7l5-6 5 6" /></svg>
          <Volume2 size={17} color="#e5e5e5" strokeWidth={1.200} className="ml-[11px]" />
          <div className="ml-[8px] w-[56px] flex flex-col items-center text-[11.500px] leading-[18px]"><span>12:40</span><span>25.10.2018</span></div>
          <svg width="16" height="17" viewBox="0 0 16 17" fill="none" stroke="#e5e5e5" className="ml-[17px]"><path d="M.5 .5h15v12H9l-2 3-1-3H.5z" /></svg>
        </div>
      </div>

      {/* watermark */}
      <div className="absolute left-[1630px] top-[990px] flex items-end pointer-events-none">
        <svg width="72" height="62" viewBox="0 0 72 62" fill="none" stroke="#b5b5b5" className="opacity-90">
          <path d="M3 6c8-9 20 4 28 24-5 6-9 10-13 8C9 33 1 16 3 6z" strokeWidth="5" />
          <path d="M68 15c-6-6-20-2-28 14-6 12-8 24-1 28 8 2 18-12 24-24 3-6 6-13 5-18z" strokeWidth="5" />
          <path d="M18 40c-10 4-17 14-9 18 8 1 17 2 24-2" strokeWidth="3" />
          <path d="M47 27C40 35 34 46 38 52" strokeWidth="3" />
        </svg>
        <span className="ml-[-10px] -mb-[2px] text-[23px] font-bold font-['Liberation_Sans',sans-serif] text-[#bdbdbd]/90 whitespace-nowrap tracking-[0.300px] leading-none">PSD-Tutorials.de</span>
      </div>
    </div>
  );
}
